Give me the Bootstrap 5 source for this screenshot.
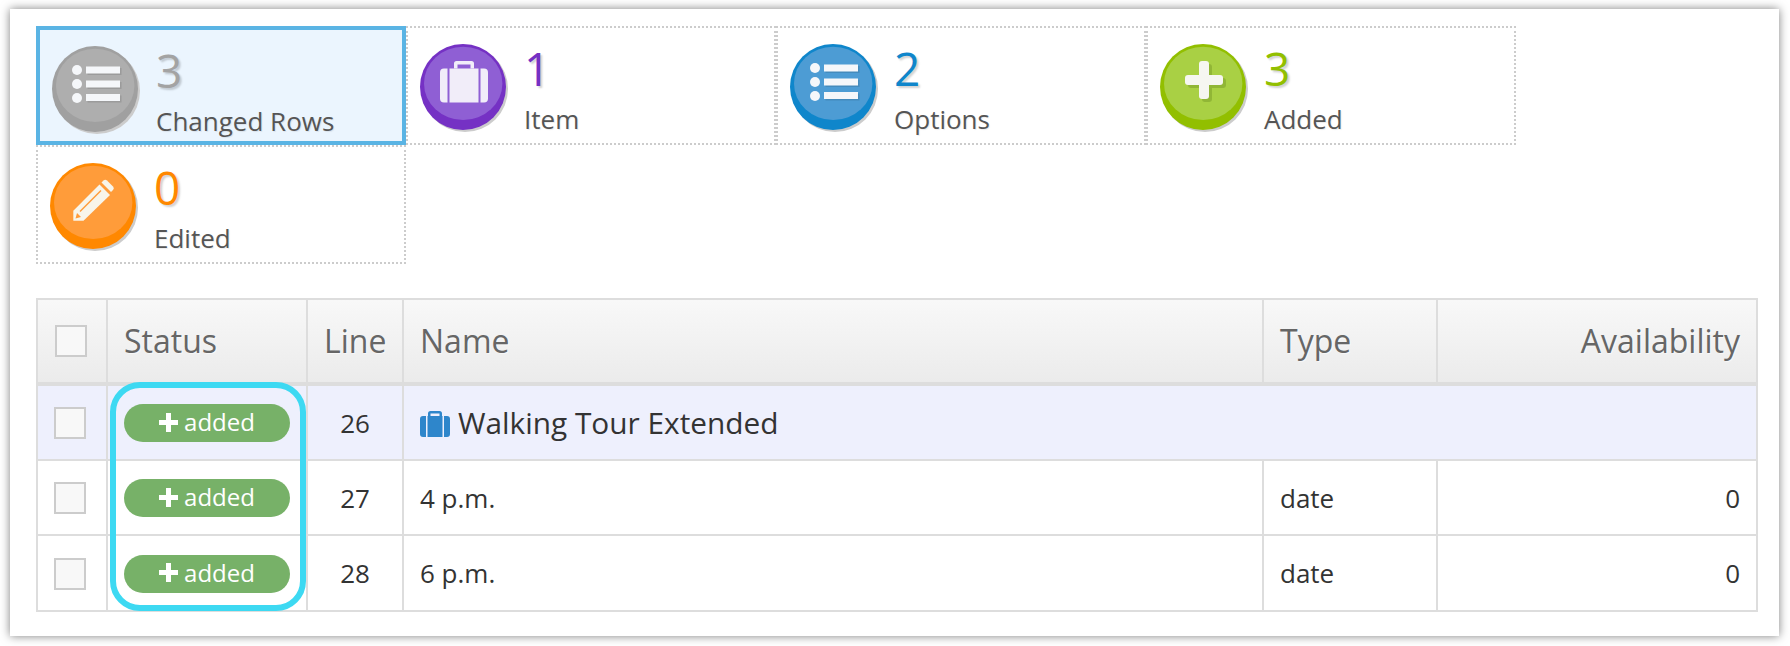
<!DOCTYPE html>
<html lang="en">
<head>
<meta charset="utf-8">
<title>Changed Rows</title>
<link rel="stylesheet" href="https://cdn.jsdelivr.net/npm/bootstrap@5.3.0/dist/css/bootstrap.min.css">
<style>
html,body{background:#fff;font-family:"Open Sans",sans-serif;color:#333}
body{padding:9px 11px 10px 10px;height:646px}
.sheet{height:627px;padding:17px 22px 0 26px;background:#fff;box-shadow:0 0 9px rgba(0,0,0,.5)}
.tiles{display:grid;grid-template-columns:repeat(4,370px);grid-auto-rows:119px}
.tile{border:2px dotted #ccc;padding:16px 12px;display:flex;color:#555}
.tile.picked{border:4px solid #5ab4e4;background:#ebf5fe}
.disc{width:90px;height:90px;flex:none;margin-right:14px;overflow:visible}
.num{display:block;font-size:46px;line-height:56px;margin-top:-4px;text-shadow:2px 2px 2px rgba(0,0,0,.18)}
.lbl{display:block;font-size:26px;line-height:34px;margin-top:6px;text-shadow:1px 1px 1px rgba(0,0,0,.08)}
.c-grey{color:#a3a3a3}.c-purple{color:#7531c4}.c-blue{color:#0f86cb}.c-green{color:#92bf00}.c-orange{color:#ff8800}
.grid-wrap{margin-top:34px;position:relative;width:1720px}
.grid-wrap .table{margin:0;table-layout:fixed;width:1720px;--bs-table-bg:transparent;--bs-border-color:#ddd;border-color:#ddd;color:#333}
.grid-wrap .table>*>*>*{border-width:2px;border-color:#ddd;padding:2px 16px 0;font-size:26px;vertical-align:middle}
.grid-wrap thead tr{height:85px;background:linear-gradient(#f8f8f8,#ebebeb)}
.grid-wrap .table>thead>tr>th{font-weight:400;font-size:32px;color:#666;padding-top:0;border-bottom-width:4px;text-shadow:1px 1px 1px rgba(255,255,255,.6)}
.grid-wrap tbody tr{height:75.500px}
.grid-wrap tbody tr.parent{background:#eef0fd}
.grid-wrap .table>tbody>tr>td.pname{font-size:29.800px}
.tick{display:block;width:32px;height:32px;border:2px solid #ccc;background:#f8f8f8;margin-left:1px}
.grid-wrap tbody .tick{margin-left:0}
.pill-added{display:flex;align-items:center;justify-content:center;gap:6px;width:166px;height:38px;border-radius:19px;background:#77b168;color:#fff;font-size:24px;line-height:1}
.pill-added svg{width:19px;height:19px;flex:none;position:relative;top:-1px}
.pill-added span{position:relative;top:-1px}
.case-ico{width:30px;height:26px;margin-right:8px;vertical-align:-3px}
.ring{position:absolute;left:74px;top:84px;width:196px;height:229px;border:6px solid #3dd9f2;border-radius:30px;pointer-events:none}
</style>
</head>
<body>
<svg width="0" height="0" class="d-block" aria-hidden="true">
  <defs>
    <symbol id="i-list" viewBox="0 0 90 90">
      <g fill="#000" opacity=".1" transform="translate(1.5 1.5)">
        <rect x="34" y="20.5" width="34" height="7"/><rect x="34" y="34.5" width="34" height="7"/><rect x="34" y="48" width="34" height="7"/>
      </g>
      <g fill="#f5f7fa">
        <circle cx="25" cy="24" r="5"/><circle cx="25" cy="38" r="5"/><circle cx="25" cy="52" r="5"/>
        <rect x="34" y="20.5" width="34" height="7"/><rect x="34" y="34.5" width="34" height="7"/><rect x="34" y="48" width="34" height="7"/>
      </g>
    </symbol>
    <symbol id="i-case" viewBox="0 0 90 90">
      <g fill="#f1edf9">
        <path d="M34 24.500v-5a2.500 2.500 0 0 1 2.500-2.500h15a2.500 2.500 0 0 1 2.500 2.500v5h-3.500v-4h-13v4z"/>
        <path d="M27.500 24.500v34h-3.500a4 4 0 0 1-4-4v-26a4 4 0 0 1 4-4z"/>
        <rect x="29.500" y="24.500" width="29" height="34"/>
        <path d="M60.500 24.500h3.500a4 4 0 0 1 4 4v26a4 4 0 0 1-4 4h-3.500z"/>
      </g>
    </symbol>
    <symbol id="i-plus" viewBox="0 0 90 90">
      <g fill="#7ea22c" opacity=".55" transform="translate(3 3)">
        <rect x="39" y="17" width="10" height="38" rx="3"/><rect x="25" y="31" width="38" height="10" rx="3"/>
      </g>
      <g fill="#f6f6f1">
        <rect x="39" y="17" width="10" height="38" rx="3"/><rect x="25" y="31" width="38" height="10" rx="3"/>
      </g>
    </symbol>
    <symbol id="i-pencil" viewBox="0 0 90 90">
      <path d="M23.300 57.700V47.700L49.500 21.500l10.500 10.500L33.500 57.700z" fill="#f8f5ea"/>
      <path d="M30 48.500L51 27.500" stroke="#ff9c3a" stroke-width="1.500" fill="none"/>
      <path d="M25.500 55.500l1.500-5.500 4 4z" fill="#ff9c3a"/>
      <path d="M51.500 19.500l2-2a2.500 2.500 0 0 1 3.500 0l6 6a2.500 2.500 0 0 1 0 3.500l-2 2z" fill="#f8f5ea"/>
    </symbol>
  </defs>
</svg>
<main class="sheet">
  <section class="tiles">
    <div class="tile picked">
      <svg class="disc" viewBox="0 0 90 90"><circle cx="45" cy="45" r="43" fill="#ccc"/><circle cx="43" cy="43" r="43" fill="#a0a0a0"/><ellipse cx="43.200" cy="39.400" rx="39.200" ry="36.700" fill="#aeaeae"/><use href="#i-list"/></svg>
      <div><span class="num c-grey">3</span><span class="lbl">Changed Rows</span></div>
    </div>
    <div class="tile">
      <svg class="disc" viewBox="0 0 90 90"><circle cx="45" cy="45" r="43" fill="#ccc"/><circle cx="43" cy="43" r="43" fill="#7531c4"/><ellipse cx="43.200" cy="39.400" rx="39.200" ry="36.700" fill="#8f5fd4"/><use href="#i-case"/></svg>
      <div><span class="num c-purple">1</span><span class="lbl">Item</span></div>
    </div>
    <div class="tile">
      <svg class="disc" viewBox="0 0 90 90"><circle cx="45" cy="45" r="43" fill="#ccc"/><circle cx="43" cy="43" r="43" fill="#0f86cb"/><ellipse cx="43.200" cy="39.400" rx="39.200" ry="36.700" fill="#4d9cd4"/><use href="#i-list"/></svg>
      <div><span class="num c-blue">2</span><span class="lbl">Options</span></div>
    </div>
    <div class="tile">
      <svg class="disc" viewBox="0 0 90 90"><circle cx="45" cy="45" r="43" fill="#ccc"/><circle cx="43" cy="43" r="43" fill="#92bf00"/><ellipse cx="43.200" cy="39.400" rx="39.200" ry="36.700" fill="#a9d044"/><use href="#i-plus"/></svg>
      <div><span class="num c-green">3</span><span class="lbl">Added</span></div>
    </div>
    <div class="tile">
      <svg class="disc" viewBox="0 0 90 90"><circle cx="45" cy="45" r="43" fill="#ccc"/><circle cx="43" cy="43" r="43" fill="#ff8800"/><ellipse cx="43.200" cy="39.400" rx="39.200" ry="36.700" fill="#ff9c3a"/><use href="#i-pencil"/></svg>
      <div><span class="num c-orange">0</span><span class="lbl">Edited</span></div>
    </div>
  </section>
  <section class="grid-wrap">
    <table class="table table-bordered">
      <colgroup><col style="width:70px"><col style="width:200px"><col style="width:96px"><col style="width:860px"><col style="width:174px"><col style="width:320px"></colgroup>
      <thead>
        <tr><th><span class="tick"></span></th><th>Status</th><th class="text-center">Line</th><th>Name</th><th>Type</th><th class="text-end">Availability</th></tr>
      </thead>
      <tbody>
        <tr class="parent">
          <td><span class="tick"></span></td>
          <td><span class="pill-added"><svg viewBox="0 0 19 19"><path d="M7 0h5v7h7v5h-7v7H7v-7H0V7h7z" fill="#fff"/></svg><span>added</span></span></td>
          <td class="text-center">26</td>
          <td colspan="3" class="pname"><svg class="case-ico" viewBox="0 0 30 26"><path fill="#2e86cb" d="M8 5V2.500A2.500 2.500 0 0 1 10.500 0h9A2.500 2.500 0 0 1 22 2.500V5h-2.500V2.500h-9V5zM6 5v21H3a3 3 0 0 1-3-3V8a3 3 0 0 1 3-3zM7.500 5h15v21h-15zM24 5h3a3 3 0 0 1 3 3v15a3 3 0 0 1-3 3h-3z"/></svg>Walking Tour Extended</td>
        </tr>
        <tr>
          <td><span class="tick"></span></td>
          <td><span class="pill-added"><svg viewBox="0 0 19 19"><path d="M7 0h5v7h7v5h-7v7H7v-7H0V7h7z" fill="#fff"/></svg><span>added</span></span></td>
          <td class="text-center">27</td><td>4 p.m.</td><td>date</td><td class="text-end">0</td>
        </tr>
        <tr>
          <td><span class="tick"></span></td>
          <td><span class="pill-added"><svg viewBox="0 0 19 19"><path d="M7 0h5v7h7v5h-7v7H7v-7H0V7h7z" fill="#fff"/></svg><span>added</span></span></td>
          <td class="text-center">28</td><td>6 p.m.</td><td>date</td><td class="text-end">0</td>
        </tr>
      </tbody>
    </table>
    <div class="ring"></div>
  </section>
</main>
<script src="https://cdn.jsdelivr.net/npm/bootstrap@5.3.0/dist/js/bootstrap.bundle.min.js"></script>
</body>
</html>
